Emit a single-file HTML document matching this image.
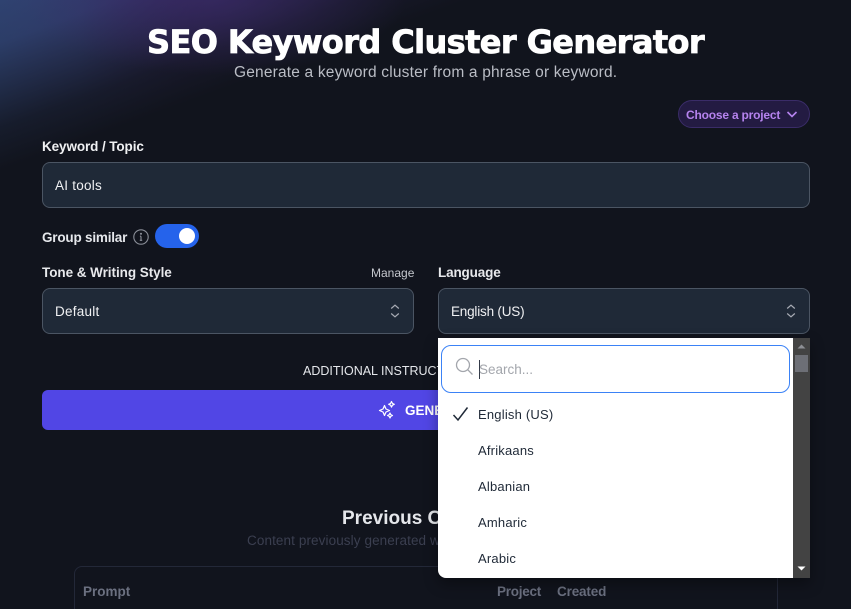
<!DOCTYPE html>
<html><head><meta charset="utf-8">
<style>
*{box-sizing:border-box;margin:0;padding:0}
html,body{width:851px;height:609px;overflow:hidden;background:#11141d}
body{position:relative;font-family:"Liberation Sans",sans-serif;color:#fff}
.t{position:absolute;white-space:nowrap;line-height:1}
.box{position:absolute;background:#1f2937;border:1px solid #4b5563;border-radius:8px}
.bg{position:absolute;left:0;top:0;width:851px;height:609px;background:
radial-gradient(ellipse 190px 75px at 215px 0px,rgba(58,43,104,.65),rgba(58,43,104,0)),
linear-gradient(160deg,rgba(17,20,29,0) 0px,rgba(17,20,29,.1) 40px,rgba(17,20,29,.5) 85px,rgba(17,20,29,.82) 120px,#11141d 160px),
linear-gradient(90deg,#2f4270 0px,#333f72 80px,#3a2b68 190px,#3a2b68 450px)}
.item{position:absolute;left:478px;font-size:13px;color:#1f2937;line-height:1;white-space:nowrap;letter-spacing:.2px}
</style></head><body>
<div class="bg"></div>

<div class="t" style="left:147px;top:26px;font-family:'DejaVu Sans',sans-serif;font-weight:700;font-size:32px;letter-spacing:-.6px;-webkit-text-stroke:.8px #fff">SEO Keyword Cluster Generator</div>
<div class="t" style="left:234px;top:65px;font-size:15.5px;color:#babdc5;letter-spacing:.18px">Generate a keyword cluster from a phrase or keyword.</div>

<div style="position:absolute;left:678px;top:100px;width:132px;height:28px;border-radius:14px;background:#231b42;border:1px solid #3a2c68"></div>
<div class="t" style="left:686px;top:109px;font-size:12px;font-weight:700;color:#b583ee;letter-spacing:-.2px">Choose a project</div>
<svg style="position:absolute;left:785px;top:109px" width="14" height="12" viewBox="0 0 14 12" fill="none" stroke="#b583ee" stroke-width="1.6"><path d="M2.500 3l4.500 4.500 4.500-4.500"/></svg>

<div class="t" style="left:42px;top:140px;font-size:13.500px;font-weight:700;color:#f0f1f3;letter-spacing:-.1px">Keyword / Topic</div>
<div class="box" style="left:42px;top:162px;width:768px;height:46px"></div>
<div class="t" style="left:55px;top:179px;font-size:13.500px;color:#f0f1f3;letter-spacing:.25px">AI tools</div>

<div class="t" style="left:42px;top:231px;font-size:13.500px;font-weight:700;color:#e5e7eb;letter-spacing:-.2px">Group similar</div>
<svg style="position:absolute;left:133px;top:229px" width="16" height="16" viewBox="0 0 16 16" fill="none" stroke="#8b8f99" stroke-width="1.100"><circle cx="8" cy="8" r="7.200"/><path d="M8 7.200v4M6.800 11.300h2.400M6.900 7.200h1.100"/><circle cx="8" cy="4.800" r=".5" fill="#8b8f99"/></svg>
<div style="position:absolute;left:155px;top:224px;width:44px;height:24px;border-radius:12px;background:#2563eb"></div>
<div style="position:absolute;left:179px;top:228px;width:16px;height:16px;border-radius:50%;background:#fff"></div>

<div class="t" style="left:42px;top:266px;font-size:13.500px;font-weight:700;color:#e8e9ec;letter-spacing:-.05px">Tone &amp; Writing Style</div>
<div class="t" style="left:371px;top:267px;font-size:12px;color:#c5c8ce">Manage</div>
<div class="box" style="left:42px;top:288px;width:372px;height:46px"></div>
<div class="t" style="left:55px;top:305px;font-size:13.500px;color:#f0f1f3;letter-spacing:.25px">Default</div>
<svg style="position:absolute;left:388px;top:302px" width="14" height="18" viewBox="0 0 14 18" fill="none" stroke="#a8acb5" stroke-width="1.200"><path d="M3.200 6.500L7 3.200l3.800 3.300M3.200 11.500L7 14.800l3.800-3.300"/></svg>

<div class="t" style="left:438px;top:266px;font-size:13.500px;font-weight:700;color:#e8e9ec;letter-spacing:-.15px">Language</div>
<div class="box" style="left:438px;top:288px;width:372px;height:46px"></div>
<div class="t" style="left:451px;top:305px;font-size:13.500px;color:#f0f1f3;letter-spacing:-.2px">English (US)</div>
<svg style="position:absolute;left:784px;top:302px" width="14" height="18" viewBox="0 0 14 18" fill="none" stroke="#a8acb5" stroke-width="1.200"><path d="M3.200 6.500L7 3.200l3.800 3.300M3.200 11.500L7 14.800l3.800-3.300"/></svg>

<div class="t" style="left:303px;top:365px;font-size:12.500px;color:#e5e7eb">ADDITIONAL INSTRUCTIONS</div>

<div style="position:absolute;left:42px;top:390px;width:768px;height:40px;border-radius:6px;background:#5146e5"></div>
<svg style="position:absolute;left:377px;top:400px" width="20" height="20" viewBox="0 0 20 20" fill="none" stroke="#fff" stroke-width="1.200" stroke-linejoin="round"><path d="M7.500 5.500l1.500 3.500 3.500 1.500-3.500 1.500-1.500 3.500-1.500-3.500-3.500-1.500 3.500-1.500z"/><path d="M14.500 1.500l.9 1.900 1.900.9-1.900.9-.9 1.900-.9-1.900-1.900-.9 1.900-.9zM13 13l.8 1.700 1.700.8-1.700.8-.8 1.700-.8-1.700-1.700-.8 1.700-.8z"/></svg>
<div class="t" style="left:405px;top:404px;font-size:13.500px;font-weight:700;color:#fff">GENERATE</div>

<div class="t" style="left:342px;top:509px;font-size:19px;font-weight:700;color:#e5e7eb">Previous Clusters</div>
<div class="t" style="left:247px;top:534px;font-size:13.500px;color:#3b3f50;letter-spacing:.1px">Content previously generated with this tool</div>

<div style="position:absolute;left:74px;top:566px;width:704px;height:60px;border:1px solid #232838;border-radius:8px"></div>
<div class="t" style="left:83px;top:585px;font-size:13.500px;font-weight:700;color:#6b7080">Prompt</div>
<div class="t" style="left:497px;top:585px;font-size:13.500px;font-weight:700;color:#6b7080;letter-spacing:-.25px">Project</div>
<div class="t" style="left:557px;top:585px;font-size:13.500px;font-weight:700;color:#6b7080;letter-spacing:-.15px">Created</div>

<!-- dropdown -->
<div style="position:absolute;left:438px;top:338px;width:372px;height:240px;background:#fff;border-radius:0 0 0 8px;box-shadow:0 6px 14px rgba(0,0,0,.35)"></div>
<div style="position:absolute;left:793px;top:338px;width:17px;height:240px;background:#434343"></div>
<div style="position:absolute;left:795px;top:355px;width:13px;height:17px;background:#6d6f76"></div>
<svg style="position:absolute;left:793px;top:338px" width="17" height="240" viewBox="0 0 17 240"><path d="M4.500 10.500L8.500 6.500l4 4z" fill="#8d8f94"/><path d="M4.500 228.500h8l-4 4z" fill="#fff"/></svg>
<div style="position:absolute;left:441px;top:345px;width:349px;height:48px;background:#fff;border:1px solid #3b82f6;border-radius:10px"></div>
<svg style="position:absolute;left:455px;top:357px" width="19" height="19" viewBox="0 0 19 19" fill="none" stroke="#a3a6ac" stroke-width="1.300"><circle cx="8" cy="8" r="6.500"/><path d="M12.800 12.800l4.700 4.700"/></svg>
<div style="position:absolute;left:479px;top:360px;width:1px;height:19px;background:#333a48"></div>
<div class="t" style="left:479px;top:363px;font-size:13.500px;color:#a3a6ac">Search...</div>
<svg style="position:absolute;left:452px;top:406px" width="18" height="16" viewBox="0 0 18 16" fill="none" stroke="#1f2937" stroke-width="1.500"><path d="M1.500 9l4.500 5L15.500 1.500"/></svg>
<div class="item" style="top:408px">English (US)</div>
<div class="item" style="top:444px">Afrikaans</div>
<div class="item" style="top:480px">Albanian</div>
<div class="item" style="top:516px">Amharic</div>
<div class="item" style="top:552px">Arabic</div>
</body></html>
